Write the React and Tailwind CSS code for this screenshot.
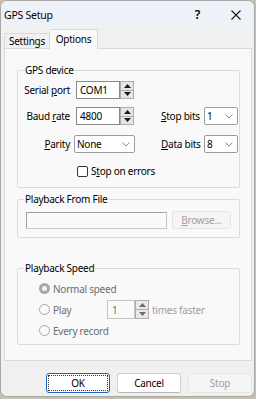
import React from 'react';

// Small up/down spinner used next to numeric edit boxes
function Spin({ disabled }) {
    const arrow = disabled ? 'fill-[#6d6d6d]' : 'fill-[#1a1a1a]';
    return (
        <div className="flex flex-col w-[14px] h-full">
            <div className={`flex-1 flex items-center justify-center border border-[#adadad] ${disabled ? 'bg-[#e8e8e8]' : 'bg-[#e5e5e5]'}`}>
                <svg width="7" height="4" viewBox="0 0 7 4"><path d="M0 4 L3.5 0 L7 4 Z" className={arrow} /></svg>
            </div>
            <div className={`flex-1 flex items-center justify-center border border-t-0 border-[#adadad] ${disabled ? 'bg-[#e8e8e8]' : 'bg-[#e5e5e5]'}`}>
                <svg width="7" height="4" viewBox="0 0 7 4"><path d="M0 0 L3.5 4 L7 0 Z" className={arrow} /></svg>
            </div>
        </div>
    );
}

function Select({ value, width }) {
    return (
        <div className={`${width} h-[18px] flex items-center justify-between bg-white border border-[#9c9c9c] rounded-[2px] pl-[2px] pr-[4px]`}>
            <span>{value}</span>
            <svg width="8" height="5" viewBox="0 0 8 5" fill="none">
                <path d="M0.5 0.5 L4 4 L7.5 0.5" stroke="#8a8a8a" strokeWidth="1" />
            </svg>
        </div>
    );
}

function Radio({ checked, label }) {
    return (
        <div className="flex items-center gap-[3px]">
            {checked ? (
                <span className="w-[11px] h-[11px] rounded-full bg-[#a8a8a8] flex items-center justify-center">
                    <span className="w-[5px] h-[5px] rounded-full bg-[#f3f3f3]" />
                </span>
            ) : (
                <span className="w-[11px] h-[11px] rounded-full border border-[#a9a9a9] bg-[#f9f9f9]" />
            )}
            {label && <span className="text-[#6d6d6d] whitespace-nowrap">{label}</span>}
        </div>
    );
}

export default function App() {
    return (
        <div className="w-[256px] h-[399px] bg-[#c7bfb0] font-['Noto_Sans',sans-serif] text-[10px] leading-[14px] tracking-[-0.25px] text-black">
            <div className="w-[255px] h-[397px] rounded-[7px] border border-[#a8a8a8] overflow-hidden flex flex-col bg-[#f0f0f0]">
                {/* Title bar */}
                <div className="h-[27px] bg-[#eef2f8] flex items-center pl-[3px] shrink-0">
                    <span className="text-[10.5px]">GPS Setup</span>
                    <span className="ml-auto mr-[31px] text-[12px] font-semibold">?</span>
                    <svg width="10" height="10" viewBox="0 0 10 10" className="mr-[13px]">
                        <path d="M0.5 0.5 L9.5 9.5 M9.5 0.5 L0.5 9.5" stroke="#1a1a1a" strokeWidth="1.1" />
                    </svg>
                </div>

                {/* Tabs */}
                <div className="h-[20px] flex items-end pl-[3px] shrink-0">
                    <div className="w-[46px] h-[15px] border border-b-0 border-[#d9d9d9] flex items-center justify-center bg-[#f0f0f0]">
                        Settings
                    </div>
                    <div className="w-[48px] h-[20px] border border-b-0 border-l-0 border-[#d9d9d9] bg-[#f9f9f9] -mb-px relative z-10 flex items-center justify-center pb-[1px]">
                        Options
                    </div>
                </div>

                {/* Tab page */}
                <div className="ml-[3px] w-[248px] h-[313px] border border-[#d9d9d9] bg-[#f9f9f9] shrink-0">
                    <fieldset className="ml-[12px] mt-[14px] w-[223px] border border-[#dcdcdc] rounded-[2px] p-0 pb-[10px]">
                        <legend className="ml-[6px] px-[1px]">GPS device</legend>

                        <div className="flex items-center h-[18px] mt-[4px] whitespace-nowrap">
                            <span className="w-[52px] text-right">Serial <u>p</u>ort</span>
                            <div className="ml-[6px] w-[44px] h-full bg-white border border-[#8a8a8a] flex items-center pl-[3px]">COM1</div>
                            <Spin />
                        </div>

                        <div className="flex items-center h-[18px] mt-[8px] whitespace-nowrap">
                            <span className="w-[52px] text-right">Baud <u>r</u>ate</span>
                            <div className="ml-[6px] w-[44px] h-full bg-white border border-[#8a8a8a] flex items-center pl-[3px]">4800</div>
                            <Spin />
                            <span className="ml-[27px] w-[39px]"><u>S</u>top bits</span>
                            <div className="ml-[4px]"><Select value="1" width="w-[34px]" /></div>
                        </div>

                        <div className="flex items-center h-[18px] mt-[10px] whitespace-nowrap">
                            <span className="w-[52px] text-right"><u>P</u>arity</span>
                            <div className="ml-[4px]"><Select value="None" width="w-[61px]" /></div>
                            <span className="ml-[26px] w-[39px]"><u>D</u>ata bits</span>
                            <div className="ml-[4px]"><Select value="8" width="w-[34px]" /></div>
                        </div>

                        <div className="flex items-center h-[12px] mt-[12px] pl-[59px] gap-[3px] whitespace-nowrap">
                            <span className="w-[11px] h-[11px] border border-[#333] rounded-[2px] bg-white" />
                            <span>S<u>t</u>op on errors</span>
                        </div>
                    </fieldset>

                    <fieldset className="ml-[12px] mt-[4px] w-[223px] border border-[#dcdcdc] rounded-[2px] p-0 pb-[8px]">
                        <legend className="ml-[6px] px-[1px]">Playback From File</legend>
                        <div className="flex items-center mt-[5px] pl-[8px]">
                            <div className="w-[141px] h-[17px] bg-[#fafafa] border border-[#a0a0a0] border-b-[#c8c8c8] border-r-[#c8c8c8]" />
                            <div className="ml-[5px] w-[59px] h-[18px] bg-[#f5f5f5] border border-[#e3e3e3] rounded-[3px] flex items-center justify-center text-[#a0a0a0]">
                                <span><u>B</u>rowse...</span>
                            </div>
                        </div>
                    </fieldset>

                    <fieldset className="ml-[12px] mt-[23px] w-[223px] border border-[#dcdcdc] rounded-[2px] p-0 pb-[3px]">
                        <legend className="ml-[6px] px-[1px]">Playback Speed</legend>
                        <div className="pt-[3px] pl-[21px]">
                            <div className="h-[21px] flex items-center">
                                <Radio checked label="Normal speed" />
                            </div>
                            <div className="h-[21px] flex items-center">
                                <div className="w-[68px]"><Radio label="Play" /></div>
                                <div className="flex h-[19px]">
                                    <div className="w-[28px] h-full bg-[#fafafa] border border-[#c4c4c4] flex items-center pl-[4px] text-[#6d6d6d]">1</div>
                                    <Spin disabled />
                                </div>
                                <span className="ml-[3px] text-[#a0a0a0] whitespace-nowrap">times faster</span>
                            </div>
                            <div className="h-[21px] flex items-center">
                                <Radio label="Every record" />
                            </div>
                        </div>
                    </fieldset>
                </div>

                {/* Dialog buttons */}
                <div className="flex justify-end gap-[7px] pr-[2px] mt-[12px]">
                    <div className="w-[64px] h-[20px] bg-white border border-[#1a66c2] rounded-[3px] p-[1px]">
                        <div className="w-full h-full border border-dotted border-[#333] flex items-center justify-center">OK</div>
                    </div>
                    <div className="w-[64px] h-[20px] bg-white border border-[#d0d0d0] border-b-[#b8b8b8] rounded-[3px] flex items-center justify-center">
                        Cancel
                    </div>
                    <div className="w-[64px] h-[20px] bg-[#f5f5f5] border border-[#e5e5e5] rounded-[3px] flex items-center justify-center text-[#a0a0a0]">
                        Stop
                    </div>
                </div>
            </div>
        </div>
    );
}
